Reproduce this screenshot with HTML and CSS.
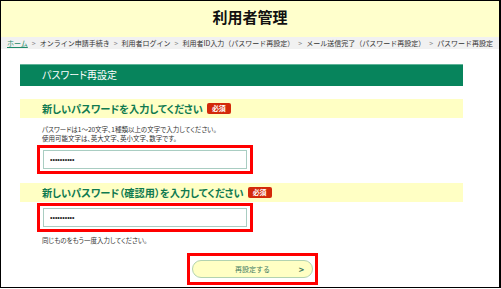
FILE: index.html
```html
<!doctype html>
<html lang="ja">
<head>
    <meta charset="utf-8">
    <title>利用者管理 | パスワード再設定</title>
    <meta name="viewport" content="width=device-width, initial-scale=1.0">
    <link rel="stylesheet" href="styles.css">
</head>
<body>
    <div class="frame">
        <header class="site-header">
            <h1>利用者管理</h1>
        </header>
        <nav class="breadcrumb">
            <a href="#">ホーム</a>
            <span class="sep">&gt;</span>
            <span>オンライン申請手続き</span>
            <span class="sep">&gt;</span>
            <span>利用者ログイン</span>
            <span class="sep">&gt;</span>
            <span>利用者ID入力（パスワード再設定）</span>
            <span class="sep">&gt;</span>
            <span>メール送信完了（パスワード再設定）</span>
            <span class="sep">&gt;</span>
            <span>パスワード再設定</span>
        </nav>
        <main class="content">
            <h2 class="section-title">パスワード再設定</h2>

            <div class="field-label">
                新しいパスワードを入力してください<span class="required">必須</span>
            </div>
            <p class="note">パスワードは1～20文字、1種類以上の文字で入力してください。<br>使用可能文字は、英大文字、英小文字、数字です。</p>
            <div class="highlight">
                <input type="password" class="text-input" value="aaaaaaaaaa">
            </div>

            <div class="field-label second">
                新しいパスワード（確認用）を入力してください<span class="required">必須</span>
            </div>
            <div class="highlight tight">
                <input type="password" class="text-input" value="aaaaaaaaaa">
            </div>
            <p class="note single">同じものをもう一度入力してください。</p>

            <div class="actions">
                <div class="highlight btn-wrap">
                    <button type="submit" class="submit-btn">再設定する<span class="arrow">&gt;</span></button>
                </div>
            </div>
        </main>
    </div>
</body>
</html>
```

FILE: styles.css
```css
* {
    box-sizing: border-box;
}
body {
    margin: 0;
    background: #fff;
    font-family: "Noto Sans CJK JP", "Noto Sans", sans-serif;
    color: #333;
}
.frame {
    width: 501px;
    height: 288px;
    border: 1px solid #000;
    border-right-width: 2px;
    overflow: hidden;
}
.site-header {
    background-color: #ffffcc;
    height: 36px;
    display: flex;
    align-items: center;
    justify-content: center;
}
.site-header h1 {
    margin: 0 0 6px;
    font-size: 15px;
    font-weight: bold;
    color: #111;
}
.breadcrumb {
    background-color: #f1f1f1;
    height: 12px;
    padding-left: 6px;
    display: flex;
    align-items: center;
    font-size: 7px;
    white-space: nowrap;
    color: #333;
}
.breadcrumb a {
    color: #1f8a6a;
}
.breadcrumb .sep {
    color: #888;
    margin: 0 4px;
}
.content {
    padding-left: 19px;
    width: 462px;
}
.section-title {
    margin: 15px 0 0;
    height: 22px;
    background-color: #07845c;
    border-top: 1px solid #5fb398;
    color: #fff;
    font-size: 10px;
    font-weight: normal;
    line-height: 20px;
    padding-left: 22px;
    font-feature-settings: "palt";
}
.field-label {
    margin-top: 13px;
    height: 19px;
    background-color: #ffffc4;
    color: #0f7a50;
    font-size: 10.2px;
    font-weight: bold;
    padding-left: 22px;
    display: flex;
    align-items: center;
    font-feature-settings: "palt";
}
.field-label.second {
    margin-top: 9px;
}
.required {
    display: inline-block;
    margin-left: 4px;
    background-color: #d3290a;
    color: #fff;
    font-size: 7px;
    line-height: 11px;
    padding: 0 5px;
    border-radius: 2px;
}
.note {
    margin: 7px 0 0;
    padding-left: 22px;
    font-size: 6.5px;
    line-height: 9px;
    color: #333;
    font-feature-settings: "palt";
}
.note.single {
    margin-top: 4px;
}
.highlight {
    margin: 2px 0 0 17px;
    width: 216px;
    border: 3px solid #ff0000;
    padding: 2px 3px;
}
.highlight.tight {
    margin-top: 1px;
}
.text-input {
    display: block;
    width: 204px;
    height: 19px;
    border: 1px solid #a9cdc2;
    padding: 0 6px;
    font-family: "Liberation Sans", sans-serif;
    font-size: 7px;
    color: #222;
    background: #fff;
}
.actions {
    display: flex;
    justify-content: center;
    margin-top: 8px;
    padding-left: 22px;
}
.btn-wrap {
    margin: 0;
    width: 131px;
    padding: 4px 2px;
}
.submit-btn {
    position: relative;
    display: block;
    width: 121px;
    height: 18px;
    border: 1px solid #b2d3b0;
    border-radius: 10px;
    background-color: #ffffc4;
    color: #3f7d62;
    font-family: inherit;
    font-size: 7px;
    padding: 0;
}
.submit-btn .arrow {
    position: absolute;
    right: 8px;
    top: 2px;
    font-size: 9px;
    font-weight: bold;
    color: #3f7d62;
}
```
